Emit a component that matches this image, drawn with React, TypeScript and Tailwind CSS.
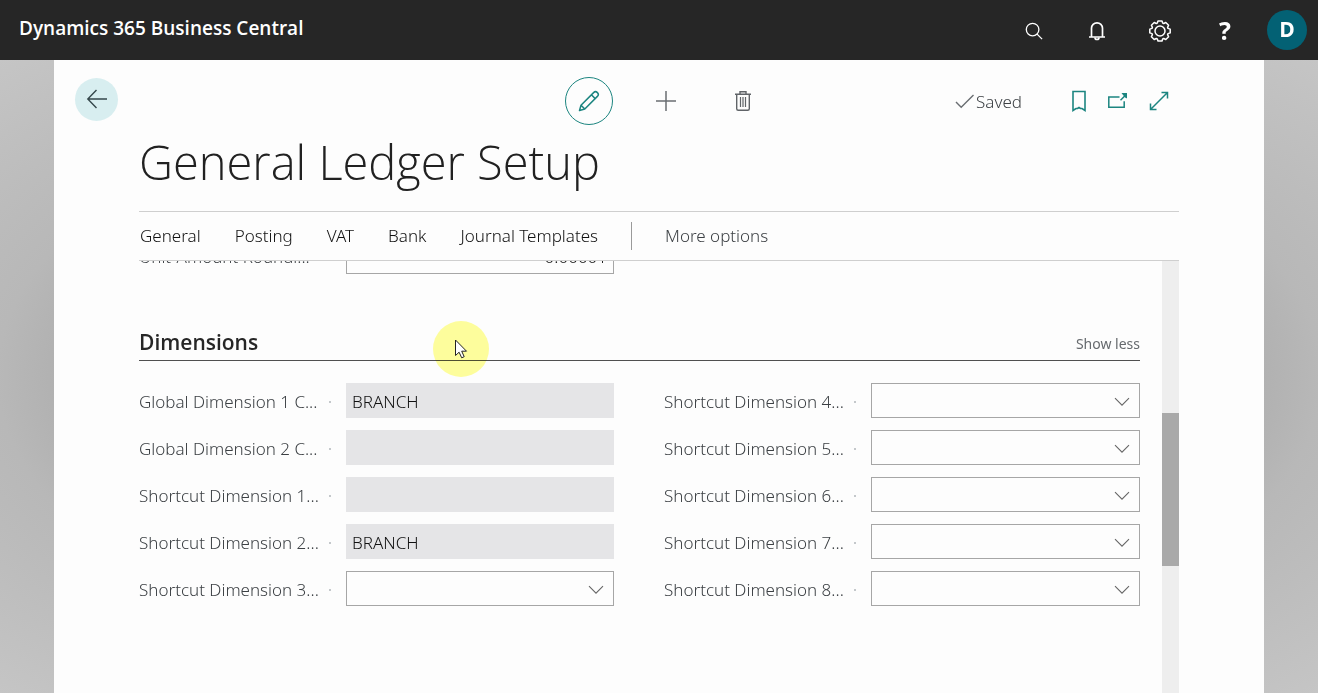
import { useState } from "react";

const tabs = ["General", "Posting", "VAT", "Bank", "Journal Templates"];

type FieldData = { label: string; value?: string; locked?: boolean };

const leftFields: FieldData[] = [
  { label: "Global Dimension 1 C...", value: "BRANCH", locked: true },
  { label: "Global Dimension 2 C...", value: "", locked: true },
  { label: "Shortcut Dimension 1...", value: "", locked: true },
  { label: "Shortcut Dimension 2...", value: "BRANCH", locked: true },
  { label: "Shortcut Dimension 3..." },
];

const rightFields: FieldData[] = [
  { label: "Shortcut Dimension 4..." },
  { label: "Shortcut Dimension 5..." },
  { label: "Shortcut Dimension 6..." },
  { label: "Shortcut Dimension 7..." },
  { label: "Shortcut Dimension 8..." },
];

function Field({ field, id }: { field: FieldData; id: string }) {
  return (
    <div className="flex h-[35px] items-center">
      <label htmlFor={id} className="flex w-[207px] shrink-0 items-center justify-between pt-[2px] pr-[15px] text-[17px] leading-6 whitespace-nowrap text-[#3c4044]">
        <span>{field.label}</span>
        <span aria-hidden="true" className="size-[2px] bg-[#c4c8cb]" />
      </label>
      {field.locked ? (
        <input id={id} readOnly defaultValue={field.value} className="h-full min-w-0 flex-1 bg-[#e5e5e7] px-[6px] pt-px text-[17px] text-[#111] outline-none" />
      ) : (
        <div className="relative h-full min-w-0 flex-1">
          <select id={id} className="h-full w-full appearance-none border border-[#a6a6a6] bg-[#fdfdfd] px-[6px] text-[17px] outline-none">
            <option value=""></option>
            <option value="branch">BRANCH</option>
          </select>
          <svg className="pointer-events-none absolute top-[14px] right-[10px]" width="16" height="10" viewBox="0 0 16 10" fill="none" stroke="#666" strokeWidth="1.1">
            <path d="M1 1.2 8 8.2 15 1.2" />
          </svg>
        </div>
      )}
    </div>
  );
}

export default function App() {
  const [editing, setEditing] = useState(true);
  return (
    <div className="flex h-screen flex-col overflow-hidden font-['Noto_Sans','Open_Sans',sans-serif] font-light">
      <header className="flex h-[60px] shrink-0 items-center justify-between bg-[#262626] pr-[11px] pl-[19px] font-['Open_Sans','Noto_Sans',sans-serif] text-white">
        <span className="pb-1 text-[19px] leading-6 font-semibold">Dynamics 365 Business Central</span>
        <div className="flex items-center">
          <button aria-label="Search" className="mt-[2px] mr-[43px]">
            <svg width="20" height="20" viewBox="0 0 20 20" fill="none" stroke="#fff" strokeWidth="1.3">
              <circle cx="8.600" cy="8.600" r="6.300" />
              <path d="m13.100 13.100 5 5" />
            </svg>
          </button>
          <button aria-label="Notifications" className="mt-[2px] mr-[41px]">
            <svg width="20" height="22" viewBox="0 0 20 22" fill="none" stroke="#fff" strokeWidth="1.700">
              <path d="M2 17h16M4.500 17V8.300a5.500 5.500 0 0 1 11 0V17" />
              <path d="M8 17.500a2 2 0 0 0 4 0" />
            </svg>
          </button>
          <button aria-label="Settings" className="mt-[2px] mr-[47px]">
            <svg width="24" height="24" viewBox="0 0 24 24" fill="none" stroke="#fff" strokeWidth="1.500" strokeLinejoin="round">
              <path d="M10 1.900h4l.7 2.200 1 .4 2.100-1 2.800 2.800-1 2.100.4 1 2.200.7v3.800l-2.200.7-.4 1 1 2.100-2.800 2.800-2.100-1-1 .4-.7 2.200h-4l-.7-2.200-1-.4-2.100 1-2.800-2.800 1-2.100-.4-1-2.200-.7v-3.800l2.200-.7.4-1-1-2.100 2.800-2.800 2.100 1 1-.4z" />
              <circle cx="12" cy="12" r="5" />
            </svg>
          </button>
          <button aria-label="Help" className="mr-[36px] text-[25px] leading-7 font-bold">?</button>
          <button aria-label="Account" className="flex size-10 items-center justify-center rounded-full bg-[#036174] text-[21px] font-bold">D</button>
        </div>
      </header>

      <div className="flex min-h-0 flex-1 bg-radial from-[#acacac] from-60% via-[#b8b8b8] via-71% to-[#c5c5c5] px-[54px]">
        <main className="flex min-w-0 flex-1 flex-col bg-[#fdfdfd]">
          <div className="grid h-[82px] shrink-0 grid-cols-[1fr_auto_1fr] items-center">
            <div className="pb-1 pl-[21px]">
              <button aria-label="Back" className="flex size-[43px] items-center justify-center rounded-full bg-[#d8eef0]">
                <svg width="22" height="20" viewBox="0 0 22 20" fill="none" stroke="#35474b" strokeWidth="1.400">
                  <path d="M10.500 1 1.800 10l8.700 9M2 10h19" />
                </svg>
              </button>
            </div>
            <div className="flex items-center pr-[2px]">
              <button aria-label="Edit" aria-pressed={editing} onClick={() => setEditing(!editing)} className="flex size-12 items-center justify-center rounded-full border border-[#1c8580]">
                <svg width="22" height="22" viewBox="0 0 22 22" fill="none" stroke="#1c8580" strokeWidth="1.500" strokeLinejoin="round">
                  <path d="M1.500 20.500 3 15.200 15.600 2.600a2.600 2.600 0 0 1 3.800 3.800L6.800 19zM3 15.200 6.800 19M13.400 4.800l3.800 3.800" />
                </svg>
              </button>
              <button aria-label="New" className="ml-[42px]">
                <svg width="22" height="22" viewBox="0 0 22 22" stroke="#6a6e72" strokeWidth="1.500">
                  <path d="M11 1v20M1 11h20" />
                </svg>
              </button>
              <button aria-label="Delete" className="ml-[57px]">
                <svg width="18" height="22" viewBox="0 0 18 22" fill="none" stroke="#606468" strokeWidth="1.400">
                  <path d="M1 4.200h16M6 4V1.800h6V4M2.700 4v14.800c0 1 .6 1.500 1.500 1.500h9.600c.9 0 1.500-.5 1.500-1.500V4" />
                  <path d="M6.500 7v10M9 7v10M11.500 7v10" strokeWidth="1.200" />
                </svg>
              </button>
            </div>
            <div className="flex items-center justify-end pr-[95px]">
              <span className="mr-[50px] flex items-center gap-px pt-[2px] text-[17px] leading-6 text-[#3c4044]">
                <svg width="20" height="16" viewBox="0 0 20 16" fill="none" stroke="#6a6e72" strokeWidth="1.400">
                  <path d="m1 8 5.200 5.200L18.500 1" />
                </svg>
                Saved
              </span>
              <div className="flex items-center gap-[20px] text-[#1c8580]">
                <button aria-label="Bookmark">
                  <svg width="15" height="22" viewBox="0 0 15 22" fill="none" stroke="currentColor" strokeWidth="1.600">
                    <path d="M1 1.500h12V20.500l-3-2H8.500L7 17.500l-1.500 1H4L1 20.500z" />
                  </svg>
                </button>
                <button aria-label="Open in new window">
                  <svg width="22" height="18" viewBox="0 0 22 18" fill="none" stroke="currentColor" strokeWidth="1.500">
                    <path d="M12.500 5H1.800v10.300h15.400V9.300M13.500 8.200 19 2.700" />
                    <path d="M14.500 1H20v5.500l-2-1.300-2.200-2.400z" fill="currentColor" stroke="none" />
                  </svg>
                </button>
                <button aria-label="Expand">
                  <svg width="20" height="20" viewBox="0 0 20 20" fill="none" stroke="currentColor" strokeWidth="1.500">
                    <path d="M1.500 18.500l17-17M12.500 1.500h6v6M1.500 12.500v6h6" />
                  </svg>
                </button>
              </div>
            </div>
          </div>

          <div className="flex min-h-0 flex-1 flex-col px-[85px]">
            <h1 className="h-[69px] shrink-0 font-['Open_Sans','Noto_Sans',sans-serif] text-[47px] leading-10 font-light whitespace-nowrap text-[#212121]">General Ledger Setup</h1>
            <nav className="flex h-[50px] shrink-0 items-center border-y border-[#cfcfcf] pl-px text-[17px] leading-6 whitespace-nowrap text-[#111]">
              <div className="flex gap-[34px]">
                {tabs.map((t) => (
                  <button key={t}>{t}</button>
                ))}
              </div>
              <span className="mx-[33px] h-7 w-px bg-[#9a9a9a]" />
              <button className="text-[#3c4044]">More options</button>
            </nav>

            <div className="flex min-h-0 flex-1">
              <div className="min-w-0 flex-1 overflow-hidden pr-[22px]">
                <div className="-mt-[22px] grid grid-cols-[475fr_476fr] gap-x-[50px]">
                  <div className="flex h-[35px] items-center">
                    <label htmlFor="rounding" className="w-[207px] shrink-0 text-[17px] leading-6 whitespace-nowrap text-[#3c4044]">Unit-Amount Roundi...</label>
                    <input id="rounding" defaultValue="0.00001" className="h-full min-w-0 flex-1 border border-[#a6a6a6] px-[6px] text-right text-[17px] text-[#111] outline-none" />
                  </div>
                </div>
                <section>
                  <div className="relative mt-[50px] flex h-[37px] items-center justify-between border-b border-[#505050]">
                    <h2 className="font-['Open_Sans','Noto_Sans',sans-serif] text-[21px] leading-8 font-semibold text-[#262626]">Dimensions</h2>
                    <button className="pt-[3px] text-[14px] leading-6 font-normal text-[#666a6e]">Show less</button>
                    <div className="pointer-events-none absolute -top-[3px] left-[294px] size-14 rounded-full bg-[#ffff3c]/50 mix-blend-multiply" />
                    <svg className="pointer-events-none absolute top-[15px] left-[315px]" width="14" height="20" viewBox="0 0 14 20" fill="#fff" stroke="#222" strokeWidth="1">
                      <path d="M1.500 1v15.500l3.600-3.300 2.600 5.600 2.500-1.100-2.500-5.500h4.800z" />
                    </svg>
                  </div>
                  <div className="grid grid-cols-[475fr_476fr] gap-x-[50px] pt-[22px]">
                    <div className="flex flex-col gap-3">
                      {leftFields.map((f, i) => (
                        <Field key={f.label} field={f} id={`left-${i}`} />
                      ))}
                    </div>
                    <div className="flex flex-col gap-3">
                      {rightFields.map((f, i) => (
                        <Field key={f.label} field={f} id={`right-${i}`} />
                      ))}
                    </div>
                  </div>
                </section>
              </div>
              <div className="w-[17px] shrink-0 bg-[#eeeeee] pt-[152px]">
                <div className="h-[153px] bg-[#a9a9a9]" />
              </div>
            </div>
          </div>
        </main>
      </div>
    </div>
  );
}
